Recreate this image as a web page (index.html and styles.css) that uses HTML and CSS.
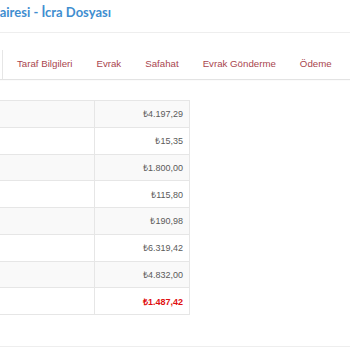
FILE: index.html
```html
<!DOCTYPE html>
<html lang="tr">
<head>
	<meta charset="UTF-8">
	<title>İcra Dosyası</title>
	<link rel="stylesheet" href="styles.css">
</head>
<body>
	<div class="page">
		<h3 class="page-title">Dairesi - İcra Dosyası</h3>

		<ul class="tabs">
			<li class="active"><span>Genel</span></li>
			<li><span>Taraf Bilgileri</span></li>
			<li><span>Evrak</span></li>
			<li><span>Safahat</span></li>
			<li><span>Evrak Gönderme</span></li>
			<li><span>Ödeme</span></li>
		</ul>

		<table class="totals">
			<tr><td class="label"></td><td>₺4.197,29</td></tr>
			<tr><td class="label"></td><td>₺15,35</td></tr>
			<tr><td class="label"></td><td>₺1.800,00</td></tr>
			<tr><td class="label"></td><td>₺115,80</td></tr>
			<tr><td class="label"></td><td>₺190,98</td></tr>
			<tr><td class="label"></td><td>₺6.319,42</td></tr>
			<tr><td class="label"></td><td>₺4.832,00</td></tr>
			<tr class="rest"><td class="label"></td><td>₺1.487,42</td></tr>
		</table>

		<div class="footer-line"></div>
	</div>
</body>
</html>
```

FILE: styles.css
```css
*{padding:0;margin:0;box-sizing:border-box;}
body{
	width:350px;
	height:350px;
	overflow:hidden;
	background:#fff;
	font-family:"Liberation Sans",Arial,sans-serif;
}
.page{
	margin-left:-99px;
	width:460px;
}
.page-title{
	height:33px;
	padding:4px 0 0 89px;
	font-family:Lato,sans-serif;
	font-size:13px;
	font-weight:700;
	color:#3f8ed0;
	border-bottom:1px solid #eee;
}
.tabs{
	display:flex;
	list-style:none;
	margin-top:14px;
	height:32px;
	box-shadow:0 1px 1px #e3e3e3;
}
.tabs li{
	padding:1px 12px 0;
	font-size:9.7px;
	line-height:32px;
	color:#a9454e;
}
.tabs li:nth-child(2){padding-left:14px;}
.tabs li.active{
	width:102px;
	margin-top:3px;
	border-right:1px solid #e6e6e6;
}
.tabs li.active span{visibility:hidden;}
.totals{
	margin:21px 0 0 99px;
	width:190px;
	border-collapse:collapse;
	font-size:9px;
	color:#5a5a5a;
}
.totals td{
	height:26.75px;
	padding:0 6px 0 5px;
	border:1px solid #e6e6e6;
	text-align:right;
}
.totals td.label{
	width:94px;
	border-left:none;
}
.totals tr:nth-child(odd){background:#f9f9f9;}
.totals tr.rest{background:#fff;}
.totals tr.rest td{
	color:#e01010;
	font-weight:700;
}
.footer-line{
	margin-top:31px;
	border-top:1px solid #eee;
}
```
